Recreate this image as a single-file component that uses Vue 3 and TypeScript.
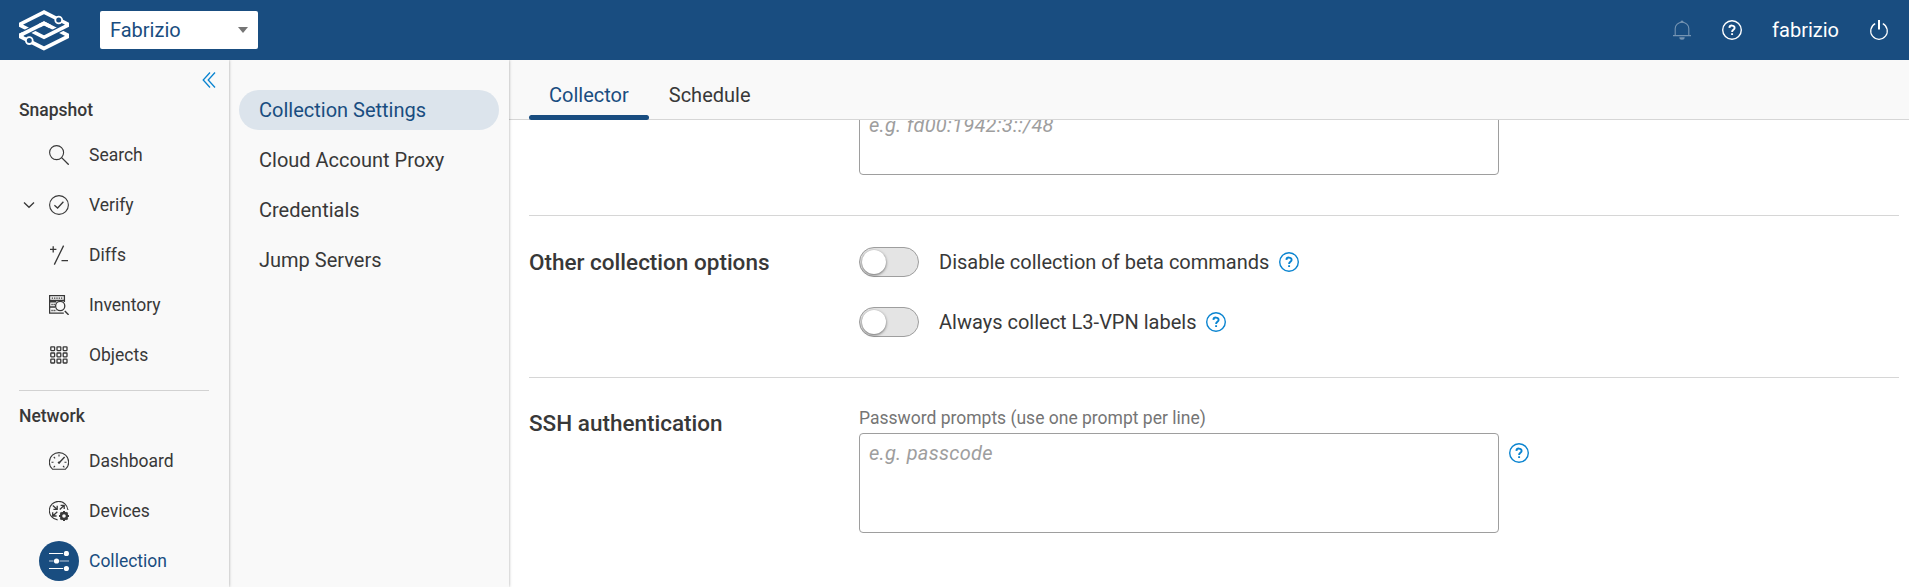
<script setup lang="ts">
import { ref } from 'vue'

interface NavItem {
  label: string
  icon: string
  active?: boolean
  expandable?: boolean
}

const snapshotItems: NavItem[] = [
  { label: 'Search', icon: 'search' },
  { label: 'Verify', icon: 'verify', expandable: true },
  { label: 'Diffs', icon: 'diffs' },
  { label: 'Inventory', icon: 'inventory' },
  { label: 'Objects', icon: 'objects' },
]
const networkItems: NavItem[] = [
  { label: 'Dashboard', icon: 'dashboard' },
  { label: 'Devices', icon: 'devices' },
  { label: 'Collection', icon: 'collection', active: true },
]
const groups = [
  { title: 'Snapshot', items: snapshotItems },
  { title: 'Network', items: networkItems },
]

const pages = ['Collection Settings', 'Cloud Account Proxy', 'Credentials', 'Jump Servers']
const activePage = ref(pages[0])

const tabs = ['Collector', 'Schedule']
const activeTab = ref(tabs[0])

const options = ref([
  { label: 'Disable collection of beta commands', on: false },
  { label: 'Always collect L3-VPN labels', on: false },
])

const gridSteps = [1.9, 8.1, 14.3]
const gearTeeth = [0, 45, 90, 135, 180, 225, 270, 315]
</script>

<template>
  <div class="app">
    <header class="topbar">
      <svg class="logo" viewBox="0 0 50 42">
        <g fill="none" stroke-linejoin="miter">
          <path class="band" d="M25 39.5 0 26.9 25 14.3 50 26.9Z" />
          <path class="halo" d="M25 3.1 0 15.7 25 28.3 50 15.7Z" />
          <path class="band" d="M25 3.1 0 15.7 25 28.3 50 15.7Z" />
          <path class="halo" d="M4 24.9 20 16.8" />
          <path class="band" d="M0 26.9 25 14.3 31 17.3" />
          <circle class="node" cx="39.7" cy="11" r="3.4" />
          <circle class="node" cx="10.3" cy="31.6" r="3.4" />
        </g>
      </svg>
      <button class="select">
        <span>Fabrizio</span>
        <i class="caret"></i>
      </button>
      <div class="actions">
        <svg class="bell" width="20" height="20" viewBox="0 0 20 20">
          <path d="M3.2 15.3V8.6a6.8 6.3 0 0 1 13.6 0V15.3M1 15.6H19" fill="none" stroke="currentColor" stroke-width="1.1" />
          <path d="M8.3 2.6a1.7 2.2 0 0 1 3.4 0ZM7.3 17.2H12.7a2.7 2.5 0 0 1-5.4 0Z" fill="currentColor" />
        </svg>
        <svg class="help" width="20" height="20" viewBox="0 0 20 20" fill="none" stroke="currentColor">
          <circle cx="10" cy="10" r="9.3" stroke-width="1.4" />
          <path d="M7.4 7.9c.1-3.2 5.3-3 5.2 0 0 1.9-2.5 1.9-2.5 4M10.1 13.2v1.9" stroke-width="1.9" />
        </svg>
        <span class="user">fabrizio</span>
        <svg class="power" width="20" height="20" viewBox="0 0 20 20" fill="none" stroke="currentColor">
          <path d="M6.2 3.6A8.3 8.3 0 1 0 13.8 3.6" stroke-width="1.2" />
          <path d="M10 0V9.6" stroke-width="2" />
        </svg>
      </div>
    </header>

    <div class="body">
      <aside class="sidebar">
        <div class="collapse">
          <svg width="14" height="18" viewBox="0 0 14 18" fill="none" stroke="currentColor" stroke-width="1.3">
            <path d="M8 1.5 1.2 9 8 16.5M13 1.5 6.2 9 13 16.5" />
          </svg>
        </div>
        <section v-for="group in groups" :key="group.title" class="group">
          <h4>{{ group.title }}</h4>
          <a v-for="item in group.items" :key="item.label" class="nav" :class="{ active: item.active }">
            <span class="chevron">
              <svg v-if="item.expandable" width="12" height="8" viewBox="0 0 12 8" fill="none" stroke="currentColor" stroke-width="1.3">
                <path d="M1 1.5 6 6.3 11 1.5" />
              </svg>
            </span>
            <span class="bubble">
              <svg width="20" height="20" viewBox="0 0 20 20" fill="none" stroke="currentColor" stroke-width="1.1">
                <template v-if="item.icon === 'search'">
                  <circle cx="7.6" cy="7.6" r="7" />
                  <path d="M12.6 12.6 19.7 19.7" stroke-width="1.3" />
                </template>
                <template v-else-if="item.icon === 'verify'">
                  <circle cx="10" cy="10" r="9.4" />
                  <path d="M5.4 10.2 8.6 13 14.4 6.7" stroke-width="1.3" />
                </template>
                <template v-else-if="item.icon === 'diffs'">
                  <path d="M1 4.4H7.4M4.2 1.2V7.6M14.6 .6 5.3 19.6M12.5 15.7H19" stroke-width="1.3" />
                </template>
                <template v-else-if="item.icon === 'inventory'">
                  <path d="M.6.7H15.4V5.5H.6ZM.6 5.5V18.2H14.8M.6 12H6M1 6.8H7.2M15.4 5.5V7" stroke-width="1.3" />
                  <path d="M2.7 3.1H13.6" stroke-width="1.1" stroke-dasharray="1.4 .9" />
                  <path d="M2.4 9.4H6.2M2.4 15.4H7.2" stroke-width="1.5" stroke-dasharray="1.3 .8" />
                  <circle cx="11.2" cy="11" r="4.6" stroke-width="1.3" />
                  <path d="M15.8 16 19.6 19.8" stroke-width="1.5" />
                </template>
                <template v-else-if="item.icon === 'objects'">
                  <template v-for="y in gridSteps" :key="y">
                    <rect v-for="x in gridSteps" :key="x" :x="x - 0.1" :y="y - 0.1" width="3.8" height="3.8" rx=".5" stroke-width="1.3" />
                  </template>
                </template>
                <template v-else-if="item.icon === 'dashboard'">
                  <path d="M3.5 18.2C-1.1 14.2-.3 7.5 3.4 4.2a9.7 9.7 0 0 1 13.2 0C20.3 7.5 21.1 14.2 16.5 18.2Z" />
                  <path d="M10 12 15.6 6" stroke-width="1.4" />
                  <circle cx="10" cy="11.6" r="1.2" fill="currentColor" stroke="none" />
                  <path d="M10 3.6V5.6M4.8 6 6.1 7.3M2.5 11.3H4.5M15.5 11.3H17.5M4.6 16.4 6 15M15.4 16.4 14 15" />
                </template>
                <template v-else-if="item.icon === 'devices'">
                  <path d="M18.9 9A9.3 9.3 0 1 0 8.6 18.9" />
                  <path d="M3.8 4.6 8 8.2M8.2 4.8V8.4H4.4M10.8 8.4 15 4.6M11.6 4.4H15.2V8M8.3 10.8 3.8 14.9M3.7 11.3V15H7.6" stroke-width="1.3" />
                  <circle cx="15" cy="15" r="3" stroke-width="2.4" />
                  <path v-for="a in gearTeeth" :key="a" d="M15 10V12" stroke-width="2" :transform="`rotate(${a} 15 15)`" />
                </template>
                <template v-else>
                  <path d="M0 2.5H14M0 17.5H14" stroke-width="1.2" />
                  <path d="M0 10H4.5M10.5 10H20" stroke-width="1.2" opacity=".7" />
                  <g fill="currentColor" stroke="none">
                    <circle cx="17.4" cy="2.5" r="2.6" />
                    <circle cx="7.5" cy="10" r="2.6" />
                    <circle cx="17.4" cy="17.5" r="2.6" />
                  </g>
                </template>
              </svg>
            </span>
            <span class="label">{{ item.label }}</span>
          </a>
        </section>
      </aside>

      <nav class="subnav">
        <a v-for="page in pages" :key="page" :class="{ active: page === activePage }" @click="activePage = page">{{ page }}</a>
      </nav>

      <main class="content">
        <div class="tabs">
          <a v-for="tab in tabs" :key="tab" :class="{ active: tab === activeTab }" @click="activeTab = tab">{{ tab }}</a>
        </div>
        <div class="scroller">
          <section class="row row-first">
            <h3></h3>
            <textarea class="short" placeholder="e.g. fd00:1942:3::/48"></textarea>
          </section>
          <section class="row row-options">
            <h3>Other collection options</h3>
            <div class="options">
              <div v-for="option in options" :key="option.label" class="option">
                <span class="toggle" :class="{ on: option.on }" @click="option.on = !option.on"><i></i></span>
                <span>{{ option.label }}</span>
                <svg class="hint" width="20" height="20" viewBox="0 0 20 20" fill="none" stroke="currentColor">
                  <circle cx="10" cy="10" r="9.3" stroke-width="1.4" />
                  <path d="M7.4 7.9c.1-3.2 5.3-3 5.2 0 0 1.9-2.5 1.9-2.5 4M10.1 13.2v1.9" stroke-width="1.9" />
                </svg>
              </div>
            </div>
          </section>
          <section class="row row-ssh">
            <h3>SSH authentication</h3>
            <div class="field">
              <label>Password prompts (use one prompt per line)</label>
              <div class="field-line">
                <textarea placeholder="e.g. passcode"></textarea>
                <svg class="hint" width="20" height="20" viewBox="0 0 20 20" fill="none" stroke="currentColor">
                  <circle cx="10" cy="10" r="9.3" stroke-width="1.4" />
                  <path d="M7.4 7.9c.1-3.2 5.3-3 5.2 0 0 1.9-2.5 1.9-2.5 4M10.1 13.2v1.9" stroke-width="1.9" />
                </svg>
              </div>
            </div>
          </section>
        </div>
      </main>
    </div>
  </div>
</template>

<style>
body {
  margin: 0;
  overflow: hidden;
}
</style>

<style scoped>
.app {
  height: 100vh;
  display: flex;
  flex-direction: column;
  overflow: hidden;
  font-family: Roboto, "Liberation Sans", sans-serif;
  font-size: 20px;
  line-height: 30px;
  color: #383838;
  background: #fff;
}
.app * {
  box-sizing: border-box;
}
svg {
  display: block;
  flex: none;
}
.topbar {
  flex: none;
  height: 60px;
  display: flex;
  align-items: center;
  padding: 0 20px 0 19px;
  background: #194d80;
  color: #fff;
}
.logo {
  width: 50px;
  height: 42px;
  overflow: hidden;
}
.halo {
  stroke: #194d80;
  stroke-width: 6;
}
.band {
  stroke: #fff;
  stroke-width: 3.7;
}
.node {
  fill: #194d80;
  stroke: #fff;
  stroke-width: 1.8;
}
.select {
  width: 158px;
  height: 38px;
  margin-left: 31px;
  padding: 0 10px 0 10px;
  display: flex;
  align-items: center;
  justify-content: space-between;
  border: 0;
  border-radius: 2px;
  background: #fff;
  color: #194d80;
  font: inherit;
}
.caret {
  border: 5px solid transparent;
  border-top: 6px solid #757575;
  border-bottom: 0;
}
.actions {
  margin-left: auto;
  display: flex;
  align-items: center;
}
.bell {
  color: #7594b2;
  margin-right: 30px;
}
.user {
  margin: 0 30px;
}
.body {
  flex: 1;
  min-height: 0;
  display: flex;
}
.sidebar {
  position: relative;
  z-index: 2;
  width: 229px;
  flex: none;
  background: #f9f9f9;
  box-shadow: 0 0 3px rgba(0, 0, 0, 0.35);
  clip-path: inset(0 -4px 0 0);
  font-size: 17.5px;
}
.collapse {
  height: 35px;
  padding: 11px 13px 0 0;
  display: flex;
  justify-content: flex-end;
  color: #0a84d0;
}
.group h4 {
  margin: 0;
  padding-left: 19px;
  font-size: 17.5px;
  font-weight: 500;
  line-height: 30px;
}
.group + .group::before {
  content: "";
  display: block;
  width: 190px;
  margin: 10px 0 10px 19px;
  border-top: 1px solid #d2d2d2;
}
.nav {
  height: 50px;
  display: flex;
  align-items: center;
}
.group h4 + .nav {
  margin-top: 5px;
}
.chevron {
  width: 39px;
  display: flex;
  justify-content: flex-end;
  padding-right: 4px;
}
.bubble {
  width: 40px;
  height: 40px;
  border-radius: 50%;
  display: grid;
  place-items: center;
}
.label {
  margin-left: 10px;
}
.nav.active {
  color: #194d80;
}
.nav.active .bubble {
  background: #194d80;
  color: #fff;
}
.subnav {
  position: relative;
  z-index: 1;
  width: 280px;
  flex: none;
  padding: 30px 10px 0 10px;
  display: flex;
  flex-direction: column;
  gap: 10px;
  background: #f9f9f9;
  box-shadow: 0 0 3px rgba(0, 0, 0, 0.35);
  clip-path: inset(0 -4px 0 0);
}
.subnav a {
  height: 40px;
  padding-left: 20px;
  border-radius: 20px;
  line-height: 40px;
}
.subnav a.active {
  background: #dce4ec;
  color: #194d80;
}
.content {
  flex: 1;
  min-width: 0;
  display: flex;
  flex-direction: column;
}
.tabs {
  height: 60px;
  flex: none;
  display: flex;
  padding-left: 20px;
  background: #f9f9f9;
  border-bottom: 1px solid #d6d6d6;
}
.tabs a {
  height: 60px;
  padding: 20px 20px 0;
  display: flex;
  flex-direction: column;
  justify-content: space-between;
  line-height: 30px;
}
.tabs a.active {
  color: #194d80;
}
.tabs a.active::after {
  content: "";
  height: 5px;
  margin: 0 -20px;
  border-radius: 2.5px;
  background: #194d80;
}
.scroller {
  flex: 1;
  min-height: 0;
  overflow: hidden;
  padding: 0 10px 0 20px;
}
.row {
  display: flex;
  border-bottom: 1px solid #d6d6d6;
}
.row:last-child {
  border-bottom: 0;
}
h3 {
  width: 330px;
  flex: none;
  margin: 0;
  font-size: 22.5px;
  font-weight: 500;
  line-height: 30px;
}
.row-first {
  height: 111px;
  margin-top: -15px;
}
.row-options {
  height: 162px;
  padding-top: 31px;
}
.row-ssh {
  padding-top: 30px;
}
textarea {
  display: block;
  width: 640px;
  height: 100px;
  margin: 0;
  padding: 4px 9px;
  border: 1px solid #9e9e9e;
  border-radius: 4px;
  resize: none;
  outline: 0;
  overflow: hidden;
  background: transparent;
  font: inherit;
  color: inherit;
}
textarea.short {
  height: 70px;
}
textarea::placeholder {
  color: #9e9e9e;
  opacity: 1;
  font-style: italic;
  letter-spacing: 0.27px;
}
.options {
  display: flex;
  flex-direction: column;
  gap: 30px;
}
.option {
  height: 30px;
  display: flex;
  align-items: center;
}
.toggle {
  width: 60px;
  height: 30px;
  margin-right: 20px;
  padding: 2px;
  border: 1px solid #9e9e9e;
  border-radius: 15px;
  background: #e4e4e4;
}
.toggle i {
  display: block;
  width: 24px;
  height: 24px;
  border-radius: 50%;
  background: #fff;
  box-shadow: 0 1px 3px rgba(0, 0, 0, 0.55);
}
.toggle.on i {
  margin-left: auto;
}
.hint {
  color: #0a84d0;
  margin-left: 10px;
}
label {
  display: block;
  height: 25px;
  font-size: 17.5px;
  line-height: 20px;
  color: #757575;
}
.field-line {
  display: flex;
}
.field-line .hint {
  margin-top: 10px;
}
</style>
